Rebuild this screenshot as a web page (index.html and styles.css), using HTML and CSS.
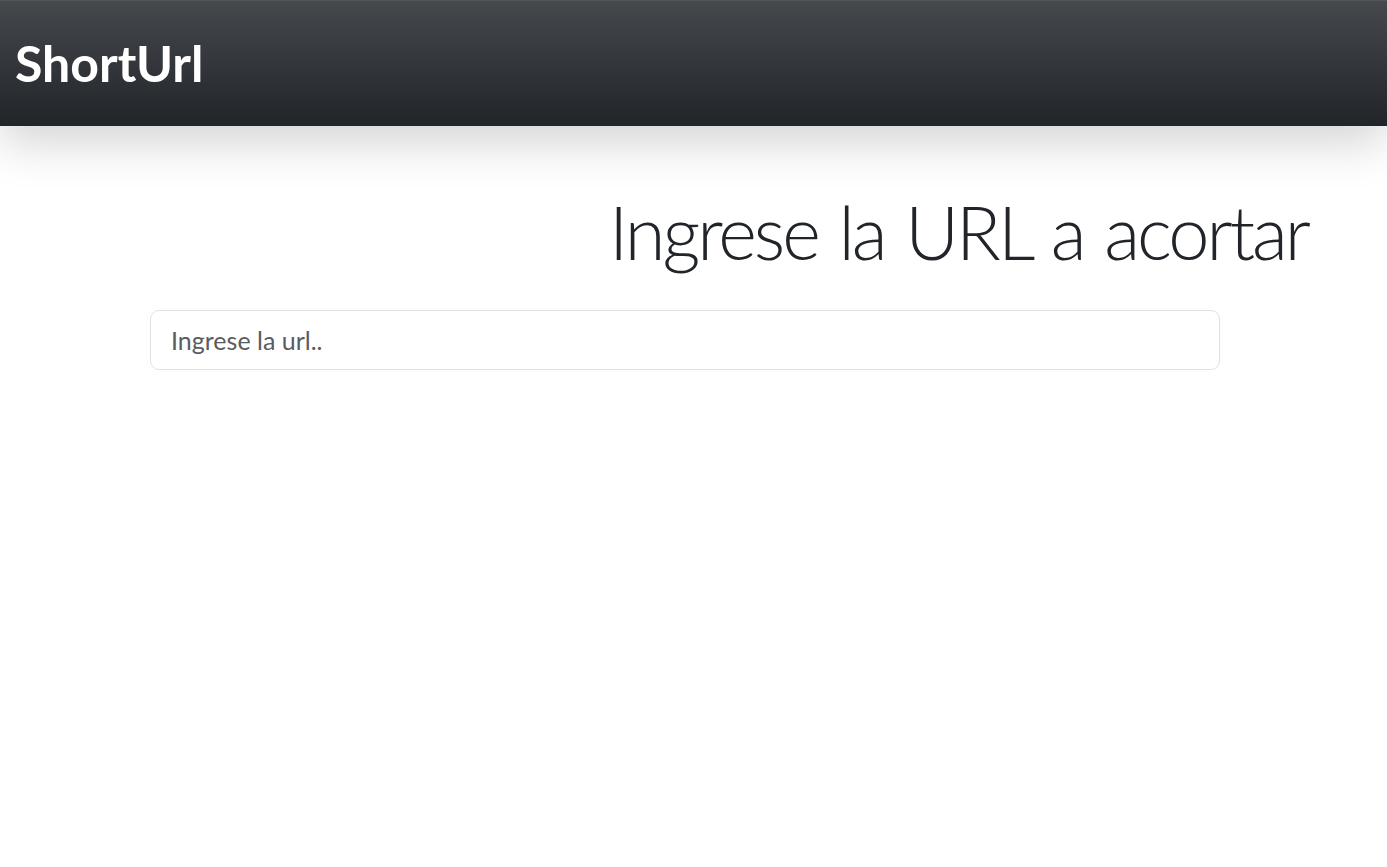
FILE: index.html
```html
<!DOCTYPE html>
<html lang="es">
<head>
<meta charset="utf-8">
<title>ShortUrl</title>
<link rel="stylesheet" href="styles.css">
</head>
<body>
<nav class="navbar">
  <a class="brand" href="#">ShortUrl</a>
</nav>
<main class="main">
  <h1 class="title">Ingrese la URL a acortar</h1>
  <div class="form-wrap">
    <input class="url-input" type="text" placeholder="Ingrese la url..">
  </div>
</main>
</body>
</html>
```

FILE: styles.css
```css
* { box-sizing: border-box; }
html, body { margin: 0; padding: 0; background: #fff; }
body {
  font-family: Lato, "Open Sans", "Liberation Sans", sans-serif;
  color: #212529;
}
.navbar {
  height: 126px;
  display: flex;
  align-items: center;
  padding: 0 15px;
  background: linear-gradient(180deg, #45484c 0%, #212428 100%);
  border-top: 1px solid #555;
  box-shadow: 0 16px 48px rgba(0,0,0,0.175);
  position: relative;
  z-index: 1;
}
.brand {
  color: #fff;
  text-decoration: none;
  font-weight: 700;
  font-size: 50px;
  line-height: 1;
  margin-top: -2px;
}
.main {
  display: flex;
  flex-direction: column;
  padding-top: 62px;
}
.title {
  margin: 0;
  font-weight: 300;
  font-size: 74px;
  letter-spacing: -3px;
  word-spacing: 3.5px;
  line-height: 1.2;
  text-align: right;
  padding-right: 79px;
}
.form-wrap {
  padding: 0 167px 0 150px;
  margin-top: 33px;
}
.url-input {
  width: 100%;
  height: 60px;
  border: 1px solid #dee2e6;
  border-radius: 9px;
  padding: 0 20px;
  font-family: inherit;
  font-size: 25px;
  color: #212529;
  outline: none;
}
.url-input::placeholder { color: #595c5f; opacity: 1; }
```
